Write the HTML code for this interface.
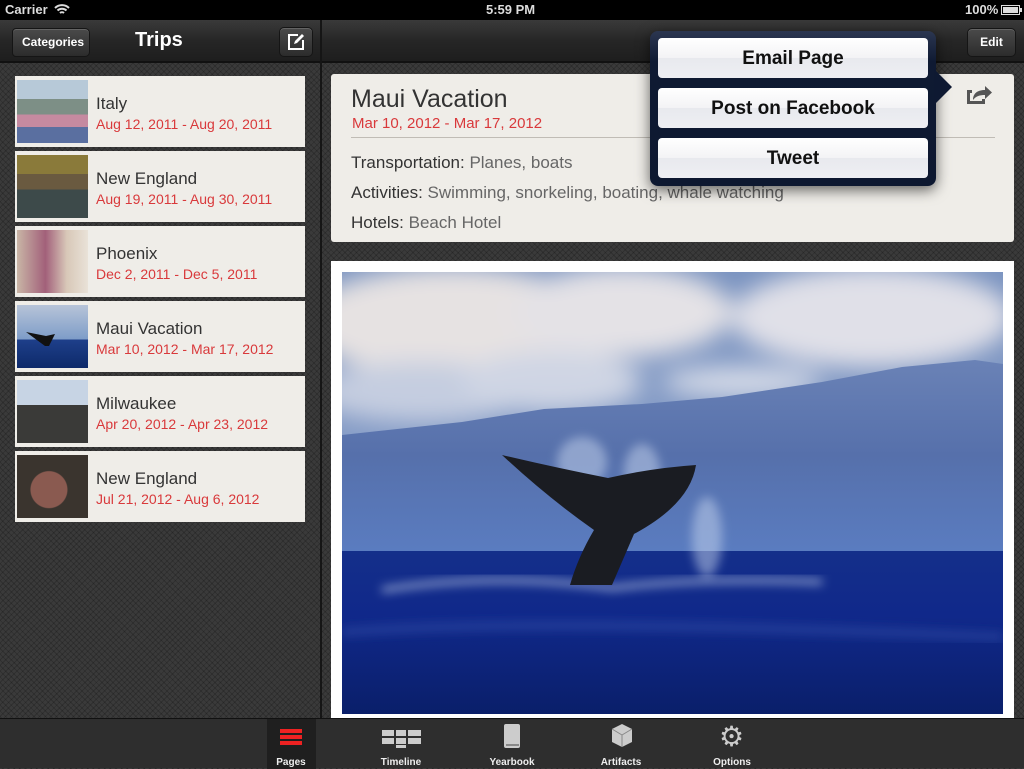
<!DOCTYPE html>
<html><head><meta charset="utf-8"><style>
*{margin:0;padding:0;box-sizing:border-box}
body{width:1024px;height:768px;overflow:hidden;position:relative;font-family:"Liberation Sans",sans-serif;background:#3a3a3a;
background-image:repeating-linear-gradient(45deg,rgba(0,0,0,.18) 0 1px,transparent 1px 4px),repeating-linear-gradient(-45deg,rgba(0,0,0,.18) 0 1px,transparent 1px 4px);}
.abs{position:absolute}
#status{left:0;top:0;width:1024px;height:20px;background:#000;color:#ddd;font-weight:bold;font-size:13px}
.nav{top:20px;height:43px;background:linear-gradient(#3a3a3a,#262626 50%,#1e1e1e);border-bottom:2px solid #111}
.btn{background:linear-gradient(#4a4a4a,#2c2c2c);border:1px solid #151515;border-radius:5px;color:#fff;font-weight:bold;font-size:12px;text-align:center;box-shadow:inset 0 1px 0 rgba(255,255,255,.15)}
.card{left:15px;width:290px;height:71px;background:#efede8}
.card .th{position:absolute;left:2px;top:4px;width:71px;height:63px}
.card .t{position:absolute;left:81px;top:18px;font-size:17px;color:#333}
.card .d{position:absolute;left:81px;top:40px;font-size:14px;color:#d9393b}
.pop{left:650px;top:31px;width:286px;height:155px;background:linear-gradient(#2b3650,#0f1a33 20%,#0d1830);border-radius:8px;box-shadow:0 4px 14px rgba(0,0,0,.6)}
.pb{position:absolute;left:8px;width:270px;height:40px;border-radius:4px;background:linear-gradient(#fff,#f3f3f5 50%,#e8e9ee 50%,#eeeff3);text-align:center;line-height:42px;font-weight:bold;font-size:19px;color:#111}
.tab{top:718px;height:50px;width:1024px;left:0;background:#2e2e2e;border-top:1px solid #111}
.tl{position:absolute;top:38px;width:90px;text-align:center;font-size:10px;font-weight:bold;color:#eee}
</style></head><body>
<div id="status" class="abs">
<span class="abs" style="left:5px;top:2px">Carrier</span>
<svg class="abs" style="left:54px;top:3px" width="16" height="13" viewBox="0 0 16 13"><path d="M1 5a10 10 0 0 1 14 0M3.5 7.5a6.5 6.5 0 0 1 9 0M6 10a3 3 0 0 1 4 0" stroke="#ddd" stroke-width="2" fill="none"/></svg>
<span class="abs" style="left:486px;top:2px">5:59 PM</span>
<span class="abs" style="left:965px;top:2px">100%</span>
<div class="abs" style="left:1001px;top:5px;width:19px;height:10px;border:1px solid #ddd;padding:1px"><div style="background:#ddd;width:100%;height:100%"></div></div>
<div class="abs" style="left:1020px;top:8px;width:2px;height:4px;background:#ddd"></div>
</div>
<div class="abs nav" style="left:0;width:320px"></div>
<div class="abs" style="left:320px;top:20px;width:2px;height:698px;background:#151515"></div>
<div class="abs nav" style="left:322px;width:702px"></div>
<div class="abs btn" style="left:12px;top:28px;width:78px;height:29px;line-height:27px;border-radius:4px 5px 5px 4px;padding-left:4px">Categories</div>
<div class="abs" style="left:135px;top:29px;color:#fff;font-weight:bold;font-size:20px">Trips</div>
<div class="abs btn" style="left:279px;top:27px;width:34px;height:30px"><svg width="20" height="20" viewBox="0 0 20 20" style="margin-top:4px"><path d="M12 3H3v14h14V8" stroke="#fff" stroke-width="2" fill="none"/><path d="M8 12l1-3 7-7 2 2-7 7z" fill="#fff"/></svg></div>
<div class="abs btn" style="left:967px;top:28px;width:49px;height:29px;line-height:27px">Edit</div>

<div class="abs card" style="top:76px"><div class="th" style="background:linear-gradient(#b7c9d8 0 30%,#7d8f86 30% 55%,#c58aa0 55% 75%,#5a6fa0 75%)"></div><div class="t">Italy</div><div class="d">Aug 12, 2011 - Aug 20, 2011</div></div>
<div class="abs card" style="top:151px"><div class="th" style="background:linear-gradient(#8a7a3a 0 30%,#6a5a40 30% 55%,#3d4a4a 55%)"></div><div class="t">New England</div><div class="d">Aug 19, 2011 - Aug 30, 2011</div></div>
<div class="abs card" style="top:226px"><div class="th" style="background:linear-gradient(90deg,#c9b6a6,#a2607a 40%,#d8c8b8 70%,#e9e2d8)"></div><div class="t">Phoenix</div><div class="d">Dec 2, 2011 - Dec 5, 2011</div></div>
<div class="abs card" style="top:301px"><div class="th" style="background:linear-gradient(#b7c4d8,#7d9cc8 55%,#1e3f8a 55%,#0e2a6a)"><svg width="71" height="63" style="position:absolute;left:0;top:0"><path d="M9 27l20 4 9-2 -6 12h-4z" fill="#111"/></svg></div><div class="t">Maui Vacation</div><div class="d">Mar 10, 2012 - Mar 17, 2012</div></div>
<div class="abs card" style="top:376px"><div class="th" style="background:linear-gradient(#c7d4e4 0 40%,#3a3a38 40%)"></div><div class="t">Milwaukee</div><div class="d">Apr 20, 2012 - Apr 23, 2012</div></div>
<div class="abs card" style="top:451px"><div class="th" style="background:radial-gradient(circle at 45% 55%,#8a5a50 0 18px,#3a342e 19px)"></div><div class="t">New England</div><div class="d">Jul 21, 2012 - Aug 6, 2012</div></div>

<div class="abs" style="left:331px;top:74px;width:683px;height:168px;background:#efede8;border-radius:3px">
<div class="abs" style="left:20px;top:11px;font-size:25px;color:#333">Maui Vacation</div>
<div class="abs" style="left:21px;top:41px;font-size:15px;color:#d9393b">Mar 10, 2012 - Mar 17, 2012</div>
<div class="abs" style="left:20px;top:63px;width:644px;height:1px;background:#c0bcb5"></div>
<div class="abs" style="left:20px;top:74px;font-size:17px;color:#333;line-height:30px">Transportation: <span style="color:#666">Planes, boats</span><br>Activities: <span style="color:#666">Swimming, snorkeling, boating, whale watching</span><br>Hotels: <span style="color:#666">Beach Hotel</span></div>
<svg class="abs" style="left:633px;top:6px" width="30" height="30" viewBox="0 0 30 30"><path d="M3 10v14h18v-5h-3v2H6v-8h2v-3z" fill="#555"/><path d="M9 20c0-7 5-10 12-10V6l7 6.5-7 6.5v-4c-5 0-9 1-12 5z" fill="#555"/></svg>
</div>

<div class="abs" style="left:331px;top:261px;width:683px;height:457px;background:#fff"></div>
<svg class="abs" style="left:342px;top:272px" width="661" height="442" viewBox="0 0 661 442">
<defs>
<linearGradient id="sky" x1="0" y1="0" x2="0" y2="1"><stop offset="0" stop-color="#7a93c0"/><stop offset=".6" stop-color="#8ea3cb"/><stop offset="1" stop-color="#6f8cc4"/></linearGradient>
<linearGradient id="mt" x1="0" y1="0" x2="0" y2="1"><stop offset="0" stop-color="#6a82b6"/><stop offset=".5" stop-color="#5670ab"/><stop offset="1" stop-color="#5a7cc0"/></linearGradient>
<linearGradient id="sea" x1="0" y1="0" x2="0" y2="1"><stop offset="0" stop-color="#142f8a"/><stop offset=".4" stop-color="#10288a"/><stop offset="1" stop-color="#0a1f6a"/></linearGradient>
<filter id="bl"><feGaussianBlur stdDeviation="12"/></filter>
<filter id="bl2"><feGaussianBlur stdDeviation="5"/></filter>
</defs>
<rect width="661" height="442" fill="url(#sky)"/>
<g filter="url(#bl)">
<ellipse cx="110" cy="50" rx="150" ry="55" fill="#e6e2e2"/><ellipse cx="280" cy="40" rx="110" ry="45" fill="#e4e2e6"/><ellipse cx="530" cy="45" rx="140" ry="50" fill="#e0e0e8"/><ellipse cx="80" cy="120" rx="110" ry="30" fill="#c5cde0"/><ellipse cx="210" cy="110" rx="90" ry="30" fill="#cfd5e4"/><ellipse cx="400" cy="110" rx="80" ry="15" fill="#d6dbe8"/>
</g>
<path d="M0 163L120 150L202 137L260 134L300 132L380 125L480 110L560 95L633 88L661 92V279H0z" fill="url(#mt)"/>
<rect y="279" width="661" height="163" fill="url(#sea)"/>
<g filter="url(#bl2)" fill="#c8d6ee" opacity=".5"><ellipse cx="240" cy="190" rx="25" ry="25"/><ellipse cx="300" cy="200" rx="18" ry="28"/><ellipse cx="365" cy="265" rx="15" ry="40"/></g>
<g filter="url(#bl2)"><path d="M40 318Q150 300 270 316Q360 305 480 310" stroke="#d8e4f4" stroke-width="5" fill="none" opacity=".7"/><path d="M0 360Q200 345 661 365" stroke="#3a56b0" stroke-width="8" fill="none" opacity=".5"/></g>
<path d="M160 183Q215 196 266 206Q310 196 354 193Q348 232 292 262L270 313H228Q236 285 252 258Q205 225 160 183z" fill="#1a1c22"/>
</svg>

<div class="abs pop">
<svg class="abs" style="left:284px;top:38px" width="20" height="40"><path d="M0 0L18 18L0 36z" fill="#0e1932"/></svg>
<div class="pb" style="top:7px">Email Page</div>
<div class="pb" style="top:57px">Post on Facebook</div>
<div class="pb" style="top:107px">Tweet</div>
</div>

<div class="abs tab">
<div class="abs" style="left:267px;top:0;width:49px;height:50px;background:#1f1f1f"></div>
<svg class="abs" style="left:280px;top:8px" width="22" height="20"><rect y="2" width="22" height="4" fill="#e22"/><rect y="8" width="22" height="4" fill="#e22"/><rect y="14" width="22" height="4" fill="#e22"/></svg>
<svg class="abs" style="left:382px;top:11px" width="40" height="18"><g fill="#ccc"><rect width="12" height="6"/><rect x="14" width="10" height="6"/><rect x="26" width="13" height="6"/><rect y="8" width="12" height="6"/><rect x="14" y="8" width="10" height="6"/><rect x="26" y="8" width="13" height="6"/><rect x="14" y="15" width="10" height="3"/></g></svg>
<svg class="abs" style="left:503px;top:5px" width="18" height="26"><rect x="1" width="16" height="24" rx="2" fill="#ccc"/><rect x="3" y="20" width="13" height="2" fill="#888"/></svg>
<svg class="abs" style="left:611px;top:5px" width="22" height="24"><path d="M11 0L21 5V18L11 23L1 18V5z" fill="#ccc"/><path d="M11 11L21 5M11 11L1 5M11 11V23" stroke="#888" stroke-width="1"/></svg>
<div class="abs" style="left:719px;top:1px;font-size:28px;color:#ccc">⚙</div>
<div class="tl" style="left:246px">Pages</div>
<div class="tl" style="left:356px">Timeline</div>
<div class="tl" style="left:467px">Yearbook</div>
<div class="tl" style="left:576px">Artifacts</div>
<div class="tl" style="left:687px">Options</div>
</div>
</body></html>
